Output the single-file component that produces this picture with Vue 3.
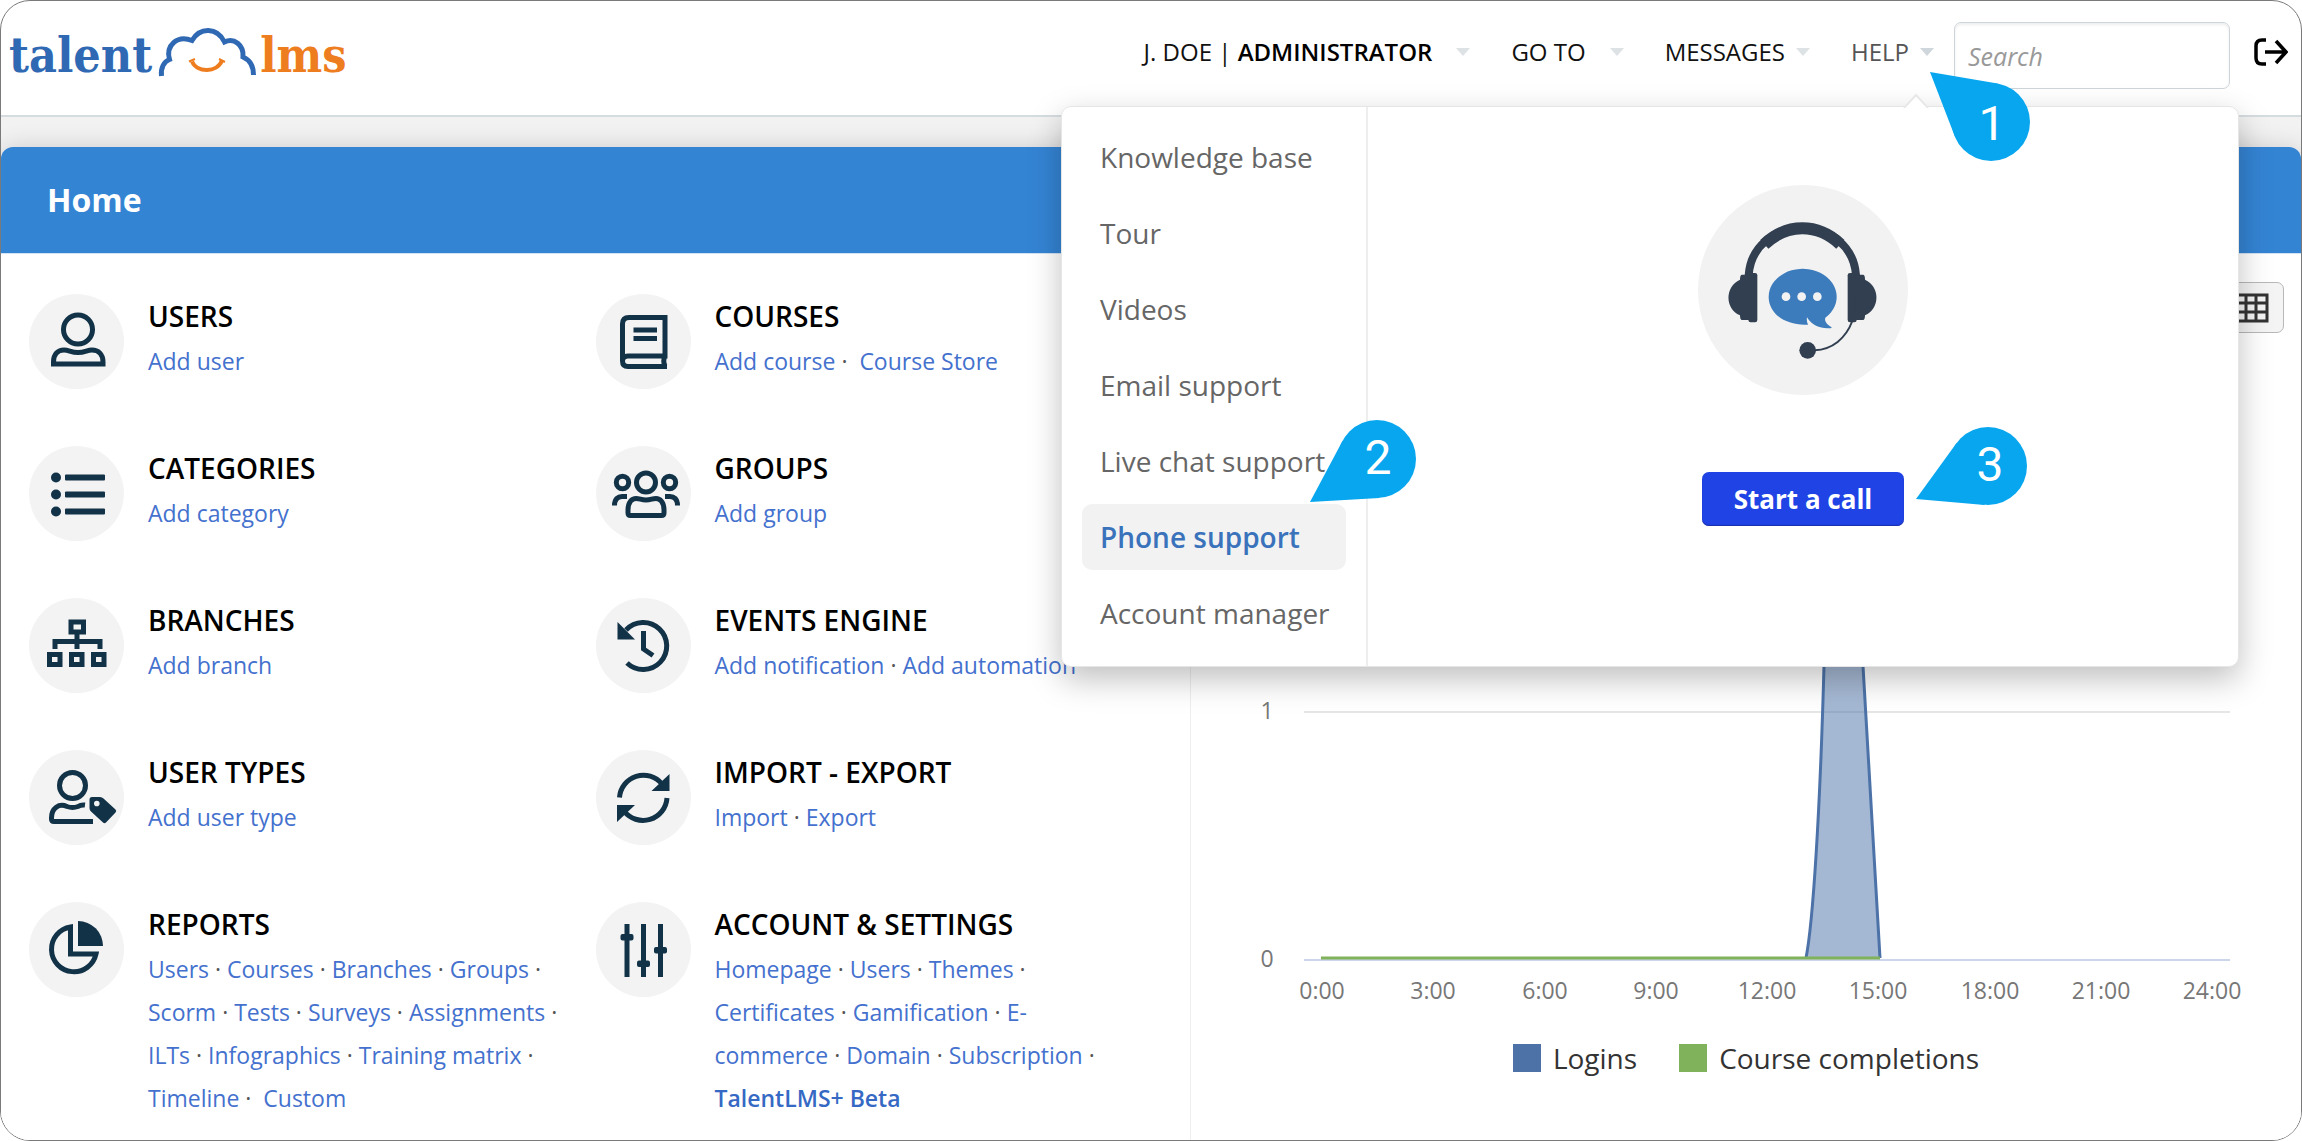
<script setup>
const navItems = [
  { id: 'go', label: 'GO TO', wide: true },
  { id: 'messages', label: 'MESSAGES', wide: false },
  { id: 'help', label: 'HELP', wide: false, open: true },
]

const helpItems = [
  'Knowledge base',
  'Tour',
  'Videos',
  'Email support',
  'Live chat support',
  'Phone support',
  'Account manager',
]
const activeHelp = 'Phone support'

const tiles = [
  { icon: 'users', title: 'USERS', links: ['Add user'] },
  { icon: 'courses', title: 'COURSES', links: ['Add course', 'Course Store'], wideLast: true },
  { icon: 'categories', title: 'CATEGORIES', links: ['Add category'] },
  { icon: 'groups', title: 'GROUPS', links: ['Add group'] },
  { icon: 'branches', title: 'BRANCHES', links: ['Add branch'] },
  { icon: 'events', title: 'EVENTS ENGINE', links: ['Add notification', 'Add automation'] },
  { icon: 'types', title: 'USER TYPES', links: ['Add user type'] },
  { icon: 'transfer', title: 'IMPORT - EXPORT', links: ['Import', 'Export'] },
  {
    icon: 'reports',
    title: 'REPORTS',
    links: ['Users', 'Courses', 'Branches', 'Groups', 'Scorm', 'Tests', 'Surveys', 'Assignments', 'ILTs', 'Infographics', 'Training matrix', 'Timeline', 'Custom'],
    wideLast: true,
  },
  {
    icon: 'settings',
    title: 'ACCOUNT & SETTINGS',
    links: ['Homepage', 'Users', 'Themes', 'Certificates', 'Gamification', 'E-commerce', 'Domain', 'Subscription', 'TalentLMS+ Beta'],
    strongLast: true,
  },
]

function separator(tile, i) {
  return tile.wideLast && i === tile.links.length - 1 ? '\u00a0· \u00a0' : '\u00a0· '
}

const hours = ['0:00', '3:00', '6:00', '9:00', '12:00', '15:00', '18:00', '21:00', '24:00'].map(
  (label, i) => ({ label, x: Math.round(131 + i * 111.25) }),
)
</script>

<template>
  <div class="frame">
    <header class="topbar">
      <a class="logo" href="#" aria-label="talentlms">
        <span class="logo-talent">talent</span>
        <svg class="logo-cloud" viewBox="156 26 104 52" aria-hidden="true">
          <path
            d="M161.500 76 C160.500 68 164 61.500 169.500 59.500 C165.500 46 177 34.500 192 40.500 C200 27 217 27 224.500 42 C234 37.500 244 45 243 57 C250 60 253.500 67 253.500 75"
            fill="none" stroke="#3069b3" stroke-width="5" stroke-linejoin="miter"
          />
          <path d="M192 61.500 C197 73 217 73 222 60.500" fill="none" stroke="#ee7d20" stroke-width="4" />
          <path d="M189 61.500 L195 59 M219 59 L225 62" fill="none" stroke="#ee7d20" stroke-width="2" />
        </svg>
        <span class="logo-lms">lms</span>
      </a>

      <nav class="nav">
        <button class="nav-item wide" type="button">
          <span>J. DOE | <strong>ADMINISTRATOR</strong></span>
          <i class="arrow"></i>
        </button>
        <button
          v-for="item in navItems" :key="item.id" type="button"
          class="nav-item" :class="{ wide: item.wide, open: item.open }"
        >
          <span>{{ item.label }}</span>
          <i class="arrow"></i>
        </button>
      </nav>

      <input class="search" type="search" placeholder="Search" aria-label="Search" />
      <button class="logout" type="button" aria-label="Log out">
        <svg viewBox="0 0 34 28" width="34" height="28" aria-hidden="true">
          <path d="M12 2 H8 Q2 2 2 8 V20 Q2 26 8 26 H12" fill="none" stroke="#000" stroke-width="3.500" />
          <path d="M11 14 H31 M22 3 L32 14 L22 25" fill="none" stroke="#000" stroke-width="3.500" />
        </svg>
      </button>
    </header>

    <main class="page">
      <h1 class="page-title">Home</h1>
      <div class="columns">
        <section class="tiles">
          <article v-for="tile in tiles" :key="tile.title" class="tile">
            <svg class="tile-icon" viewBox="0 0 95 95" aria-hidden="true">
              <circle class="disc" cx="47.500" cy="47.500" r="47.500" />
              <g v-if="tile.icon === 'users'" class="line">
                <circle cx="49" cy="35.500" r="14.500" />
                <path d="M24.500 70 V68 C24.500 60 29 56 35 56 C40 56 42 58.500 49 58.500 S58 56 63 56 C69 56 74 60 74 68 V70 Z" />
              </g>
              <g v-else-if="tile.icon === 'courses'" class="line">
                <path d="M26.500 67 V30 Q26.500 23.500 33 23.500 H69 V62 H32 Q26.500 62 26.500 67 Q26.500 72.500 32 72.500 H71 M69 62 Q66.500 67 69 72" />
                <path d="M37.500 36 H61 M37.500 44.500 H61" />
              </g>
              <g v-else-if="tile.icon === 'categories'" class="solid">
                <circle cx="27" cy="31.500" r="5" /><rect x="36" y="28.500" width="40" height="6" rx="1" />
                <circle cx="27" cy="48.500" r="5" /><rect x="36" y="45.500" width="40" height="6" rx="1" />
                <circle cx="27" cy="65.500" r="5" /><rect x="36" y="62.500" width="40" height="6" rx="1" />
              </g>
              <g v-else-if="tile.icon === 'groups'" class="line">
                <circle cx="50" cy="36.500" r="9.500" />
                <circle cx="26.500" cy="36.500" r="6.200" />
                <circle cx="73.500" cy="36.500" r="6.200" />
                <path d="M18.500 59.500 C18.500 53 22 50.500 26 50.500 H31 M69 50.500 H74 C78 50.500 81.500 53 81.500 59.500" />
                <path d="M32 67 V64 C32 56 36 52.500 40 52.500 C44 52.500 45 54 50 54 S56 52.500 60 52.500 C64 52.500 68 56 68 64 V67 Q68 69.500 65.500 69.500 H34.500 Q32 69.500 32 67 Z" />
              </g>
              <g v-else-if="tile.icon === 'branches'" class="line">
                <rect x="42" y="24" width="12.500" height="10" />
                <rect x="20.500" y="56.500" width="10.500" height="10" />
                <rect x="42.500" y="56.500" width="10.500" height="10" />
                <rect x="64.500" y="56.500" width="10.500" height="10" />
                <path d="M48 36 V51 M26 51 V43.500 H71 V51" />
              </g>
              <g v-else-if="tile.icon === 'events'" class="line">
                <path d="M30 32 A23.500 23.500 0 1 1 31 65" />
                <path d="M47.500 33 V51 L57 57.500" />
                <path class="fill" d="M21.500 24 V41.500 H39 Z" />
              </g>
              <g v-else-if="tile.icon === 'types'" class="line">
                <circle cx="43.500" cy="35.500" r="13" />
                <path d="M56 55 Q52 54.500 49 56.500 Q43.500 58.500 38 56.500 C30 53 22.500 58 22.500 68 V69 Q22.500 71.500 25 71.500 H64" />
                <path class="fill" fill-rule="evenodd" d="M63 47 H71 Q73 47 74.500 48.500 L86.500 59.500 Q88 61 86.500 62.500 L77 72.500 Q75.500 74 74 72.500 L62 61.500 Q60.500 60 60.500 58 V49.500 Q60.500 47 63 47 Z M65 53.500 A2.800 2.800 0 1 0 70.600 53.500 A2.800 2.800 0 1 0 65 53.500 Z" />
              </g>
              <g v-else-if="tile.icon === 'transfer'" class="line">
                <path d="M23.500 47.500 A24 24 0 0 1 66 34 M71 48 A24 24 0 0 1 28 61" />
                <path class="fill" d="M73.500 24 V41 H55.500 Z M21 72 V55 H39 Z" />
              </g>
              <g v-else-if="tile.icon === 'reports'" class="line">
                <path d="M41.500 25 A22.500 22.500 0 1 0 67 52 H41.500 Z" />
                <path class="fill" d="M49 19 A25 25 0 0 1 74 44 H49 Z" />
              </g>
              <g v-else class="line">
                <path d="M31 22 V75 M47.500 22 V75 M64.500 22 V75" />
                <rect class="fill" x="24.500" y="32" width="13" height="6.500" rx="2" />
                <rect class="fill" x="41" y="58.500" width="13" height="6.500" rx="2" />
                <rect class="fill" x="58" y="45" width="13" height="6.500" rx="2" />
              </g>
            </svg>
            <div class="tile-text">
              <h2>{{ tile.title }}</h2>
              <p>
                <template v-for="(link, i) in tile.links" :key="link">
                  <template v-if="i">{{ separator(tile, i) }}</template><a
                    href="#" :class="{ strong: tile.strongLast && i === tile.links.length - 1 }"
                  >{{ link }}</a>
                </template>
              </p>
            </div>
          </article>
        </section>

        <section class="stats">
          <div class="stats-tools">
            <button class="table-toggle" type="button" aria-label="Show as table">
              <svg viewBox="0 0 36 30" width="36" height="30" aria-hidden="true">
                <path d="M2 2 H34 V28 H2 Z M2 10 H34 M2 19 H34 M13 2 V28 M23 2 V28" fill="none" stroke="#333" stroke-width="3" />
              </svg>
            </button>
          </div>
          <svg class="chart" viewBox="0 0 1110 680" role="img" aria-label="Logins and course completions by hour">
            <path d="M113 131 H1039 M113 379 H1039" stroke="#e6e6e6" stroke-width="2" />
            <path d="M113 627 H1039" stroke="#ccd6eb" stroke-width="2" />
            <path
              d="M615 625 C622 590 629 480 633 333 C638 200 645 131 652 131 C660 131 668 250 672 333 L689 625 Z"
              fill="#4c72a8" fill-opacity="0.500"
            />
            <path
              d="M615 625 C622 590 629 480 633 333 C638 200 645 131 652 131 C660 131 668 250 672 333 L689 625"
              fill="none" stroke="#4c72a8" stroke-width="3"
            />
            <path d="M130 625 H689" stroke="#80b25b" stroke-width="3" />
            <g class="axis">
              <text x="76" y="386">1</text>
              <text x="76" y="634">0</text>
              <text v-for="hour in hours" :key="hour.label" :x="hour.x" y="666">{{ hour.label }}</text>
            </g>
          </svg>
          <ul class="legend">
            <li><i class="swatch logins"></i>Logins</li>
            <li><i class="swatch completions"></i>Course completions</li>
          </ul>
        </section>
      </div>
    </main>

    <aside class="help-panel">
      <svg class="beak" viewBox="0 0 26 15" width="26" height="15" aria-hidden="true">
        <path d="M1 15 L13 2 L25 15" fill="#fff" stroke="#e8e8e8" stroke-width="2" />
      </svg>
      <ul class="help-list">
        <li v-for="item in helpItems" :key="item">
          <a href="#" :class="{ active: item === activeHelp }">{{ item }}</a>
        </li>
      </ul>
      <div class="help-body">
        <svg class="headset" viewBox="82 74 630 630" aria-hidden="true">
          <circle cx="397" cy="389" r="315" fill="#f2f2f2" />
          <path d="M234 345 C240 258 310 204 395 204 S550 258 556 345" fill="none" stroke="#323f50" stroke-width="24" />
          <path d="M281 252 Q332 204 395 204 T509 252" fill="none" stroke="#323f50" stroke-width="36" />
          <g fill="#323f50">
            <rect x="233" y="338" width="27" height="148" rx="7" />
            <path d="M214 343 H236 V479 H214 Q208 479 208 465 C162 444 162 379 208 358 Q208 343 214 343 Z" />
            <rect x="531" y="338" width="27" height="148" rx="7" />
            <path d="M577 343 H555 V479 H577 Q583 479 583 465 C629 444 629 379 583 358 Q583 343 577 343 Z" />
            <circle cx="411" cy="570" r="25" />
          </g>
          <path d="M545 482 C525 535 485 567 432 570" fill="none" stroke="#323f50" stroke-width="6" />
          <path
            d="M412 493 C345 497 294 460 294 410 A102 84 0 1 1 464 472 C460 485 472 495 483 501 C483 504 480 504 470 504 C445 502 425 497 409 471 Q407 483 412 493 Z"
            fill="#3c7bbc"
          />
          <g fill="#f2f2f2">
            <circle cx="346" cy="409" r="13" /><circle cx="393" cy="409" r="13" /><circle cx="440" cy="409" r="13" />
          </g>
        </svg>
        <button class="call" type="button">Start a call</button>
      </div>

      <svg class="pin pin-1" viewBox="0 0 101 90" width="101" height="90">
        <circle cx="61" cy="50" r="39" /><path d="M0 0 L67.600 11.600 L61 50 L24.700 64 Z" />
        <text x="62" y="68">1</text>
      </svg>
      <svg class="pin pin-2" viewBox="0 0 107 83" width="107" height="83">
        <circle cx="67" cy="39" r="39" /><path d="M0 82 L69.300 78 L67 39 L32.600 20.700 Z" />
        <text x="68" y="54">2</text>
      </svg>
      <svg class="pin pin-3" viewBox="0 0 112 78" width="112" height="78">
        <circle cx="72" cy="39" r="39" /><path d="M0 72 L68.600 78 L72 39 L40.400 16.200 Z" />
        <text x="74" y="54">3</text>
      </svg>
    </aside>
  </div>
</template>

<style>
body {
  margin: 0;
  background: #fff;
}
</style>

<style scoped>
.frame {
  position: relative;
  display: flex;
  flex-direction: column;
  box-sizing: border-box;
  min-height: 100vh;
  overflow: hidden;
  border: 1px solid #7a7a7a;
  border-radius: 30px;
  background: #fff;
  font-family: 'Open Sans', 'Noto Sans', sans-serif;
}
button {
  padding: 0;
  border: 0;
  background: none;
  font: inherit;
}
a {
  color: #4471ce;
  text-decoration: none;
}

/* Top bar */
.topbar {
  display: flex;
  align-items: flex-start;
  box-sizing: border-box;
  min-height: 116px;
  padding: 21px 13px 0 8px;
  border-bottom: 2px solid #d5dce0;
}
.logo {
  display: flex;
  align-items: flex-start;
  margin-right: auto;
  font: bold 48px/66px 'DejaVu Serif Condensed', 'DejaVu Serif', serif;
}
.logo-talent {
  color: #3069b3;
}
.logo-lms {
  color: #ee7d20;
}
.logo-cloud {
  width: 104px;
  height: 52px;
  margin: 4px 0 0 4px;
}
.nav {
  display: flex;
  gap: 41px;
}
.nav-item {
  display: flex;
  align-items: center;
  gap: 11px;
  color: #111;
  font-size: 24px;
  line-height: 60px;
}
.nav-item.wide {
  gap: 24px;
}
.nav-item strong {
  color: #000;
  font-weight: 600;
}
.nav-item.open {
  color: #555;
}
.arrow {
  border: 7px solid transparent;
  border-top: 8px solid #dde2e5;
  border-bottom: 0;
}
.open .arrow {
  border-top-color: #cfd7dc;
}
.search {
  box-sizing: border-box;
  width: 276px;
  height: 67px;
  margin-left: 20px;
  padding: 0 13px;
  border: 1px solid #cdd5da;
  border-radius: 7px;
  background: #fff;
  box-shadow: inset 0 2px 3px rgba(0, 0, 0, 0.07);
  color: #333;
  font: italic 25px 'Open Sans', 'Noto Sans', sans-serif;
}
.search::placeholder {
  color: #999;
}
.logout {
  height: 60px;
  margin-left: 24px;
}
.logout svg {
  display: block;
}

/* Page */
.page {
  display: flex;
  flex: 1;
  flex-direction: column;
  padding-top: 30px;
  background: #f2f2f2;
}
.page-title {
  margin: 0;
  padding: 0 46px;
  border-bottom: 1px solid #d3e2f2;
  border-radius: 12px 12px 0 0;
  background: #3484d4;
  box-shadow: 0 0 24px rgba(0, 0, 0, 0.15);
  color: #fff;
  font-size: 32px;
  font-weight: 700;
  line-height: 106px;
}
.columns {
  position: relative;
  display: grid;
  flex: 1;
  grid-template-columns: 1190fr 1110fr;
  background: #fff;
}
.tiles {
  display: grid;
  grid-template-columns: 1fr 1fr;
  align-content: start;
  row-gap: 57px;
  padding: 40px 28px 16px;
  border-right: 1px solid #eee;
}
.tile {
  display: flex;
  gap: 24px;
  height: 95px;
  padding-right: 28px;
}
.tile:nth-last-child(-n + 2) {
  height: auto;
}
.tile-icon {
  flex: none;
  width: 95px;
  height: 95px;
}
.disc {
  fill: #f3f3f3;
}
.line {
  fill: none;
  stroke: #123247;
  stroke-width: 5px;
}
.solid,
.fill {
  fill: #123247;
  stroke: none;
}
.tile-text h2 {
  margin: 0 0 2px;
  color: #000;
  font-size: 28px;
  font-weight: 600;
  line-height: 44px;
}
.tile-text p {
  margin: 0;
  color: #555;
  font-size: 23px;
  line-height: 43px;
}
.strong {
  font-weight: 600;
  color: #3569c4;
}

/* Statistics */
.stats-tools {
  display: flex;
  justify-content: flex-end;
  padding: 28px 17px 0;
}
.table-toggle {
  box-sizing: border-box;
  height: 51px;
  padding: 0 14px;
  border: 1px solid #b8b8b8;
  border-radius: 7px;
  background: #f4f4f4;
}
.table-toggle svg {
  display: block;
}
.chart {
  display: block;
  width: 100%;
}
.axis {
  fill: #777;
  font-size: 23px;
  text-anchor: middle;
}
.legend {
  display: flex;
  justify-content: center;
  gap: 42px;
  margin: 0;
  padding: 27px 0;
  color: #333;
  font-size: 28px;
  line-height: 36px;
  list-style: none;
}
.legend li {
  display: flex;
  align-items: center;
  gap: 12px;
}
.swatch {
  width: 28px;
  height: 28px;
}
.logins {
  background: #4c72a8;
}
.completions {
  background: #80b25b;
}

/* Help panel, opened from the HELP item */
.help-panel {
  position: absolute;
  top: 105px;
  right: 62px;
  display: flex;
  box-sizing: border-box;
  width: 1178px;
  border: 1px solid #e6e6e6;
  border-radius: 10px;
  background: #fff;
  box-shadow: 0 12px 32px rgba(0, 0, 0, 0.25);
}
.beak {
  position: absolute;
  top: -14px;
  right: 309px;
}
.help-list {
  display: flex;
  flex-direction: column;
  gap: 10px;
  box-sizing: border-box;
  width: 306px;
  margin: 0;
  padding: 17px 20px 20px;
  border-right: 2px solid #eee;
  list-style: none;
}
.help-list a {
  display: block;
  padding: 0 18px;
  border-radius: 10px;
  color: #666;
  font-size: 28px;
  line-height: 66px;
  white-space: nowrap;
}
.help-list .active {
  background: #f2f2f2;
  color: #3a73bb;
  font-weight: 600;
}
.help-body {
  display: flex;
  flex: 1;
  flex-direction: column;
  align-items: center;
  gap: 77px;
  padding-top: 78px;
}
.headset {
  width: 210px;
  height: 210px;
}
.call {
  height: 54px;
  padding: 0 32px;
  border-radius: 7px;
  background: #2043e6;
  box-shadow: inset 0 -1px 1px #1a2fa8;
  color: #fff;
  font-size: 26px;
  font-weight: 700;
}

/* Numbered markers */
.pin {
  position: absolute;
  fill: #08a6ee;
}
.pin text {
  fill: #fff;
  font-family: Roboto, sans-serif;
  font-size: 48px;
  text-anchor: middle;
}
.pin-1 {
  top: -35px;
  right: 207px;
}
.pin-2 {
  top: 313px;
  right: 821px;
}
.pin-3 {
  top: 320px;
  right: 210px;
}
</style>
